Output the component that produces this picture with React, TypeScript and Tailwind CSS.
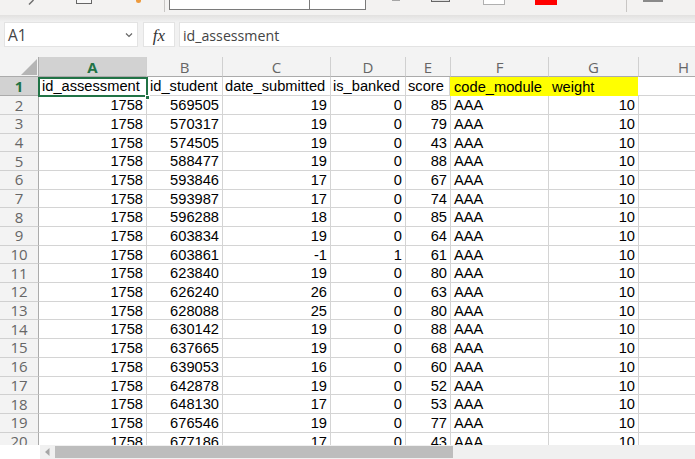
const columns = [
  { label: "A", w: "w-[108px]", active: true },
  { label: "B", w: "w-[76px]" },
  { label: "C", w: "w-[108px]" },
  { label: "D", w: "w-[75px]" },
  { label: "E", w: "w-[45px]" },
  { label: "F", w: "w-[98px]" },
  { label: "G", w: "w-[90px]" },
  { label: "H", w: "w-[90px]" },
];

const data: [string, string, string, string][] = [
  ["569505", "19", "0", "85"],
  ["570317", "19", "0", "79"],
  ["574505", "19", "0", "43"],
  ["588477", "19", "0", "88"],
  ["593846", "17", "0", "67"],
  ["593987", "17", "0", "74"],
  ["596288", "18", "0", "85"],
  ["603834", "19", "0", "64"],
  ["603861", "-1", "1", "61"],
  ["623840", "19", "0", "80"],
  ["626240", "26", "0", "63"],
  ["628088", "25", "0", "80"],
  ["630142", "19", "0", "88"],
  ["637665", "19", "0", "68"],
  ["639053", "16", "0", "60"],
  ["642878", "19", "0", "52"],
  ["648130", "17", "0", "53"],
  ["676546", "19", "0", "77"],
  ["677186", "17", "0", "43"],
];

const sans = "font-['Liberation_Sans',Arial,sans-serif]";
const ui = "font-['Open_Sans','Noto_Sans',sans-serif]";

function Cell({
  w,
  right,
  fill,
  pl = "pl-[3px]",
  children,
}: {
  w: string;
  right?: boolean;
  fill?: boolean;
  pl?: string;
  children?: React.ReactNode;
}) {
  return (
    <div
      className={`${w} ${pl} shrink-0 h-full flex items-center overflow-hidden whitespace-nowrap pr-[3px] pt-px text-[14.67px] leading-none text-black ${right ? "justify-end" : "justify-start"} ${fill ? "bg-[#ffff00]" : "border-r border-b border-[#d4d4d4]"}`}
    >
      {children}
    </div>
  );
}

function RowLabel({ n, active }: { n: number; active?: boolean }) {
  return (
    <div
      className={`w-[39px] shrink-0 h-full flex items-center justify-center ${ui} text-[15px] leading-none border-r border-b ${active ? "bg-[#d2d2d2] text-[#217346] font-bold border-[#ababab]" : "bg-[#f3f3f3] text-[#666666] border-[#d0d0d0] border-r-[#ababab]"}`}
    >
      {n}
    </div>
  );
}

export default function App() {
  return (
    <div className="w-[695px] h-[459px] overflow-hidden flex flex-col bg-[#f1f1f1]">
      {/* Ribbon remnants */}
      <div className="h-[15px] shrink-0 bg-[#f3f2f1] flex items-start overflow-hidden">
        <svg className="ml-[28px] shrink-0" width="8" height="5" viewBox="0 0 8 5">
          <path d="M1 4.5 L5.5 0" stroke="#6b6b6b" strokeWidth="1.4" fill="none" />
        </svg>
        <div className="ml-[40px] w-[16px] h-[4px] shrink-0 bg-[#f8f8f8] border-x border-b border-[#666666]" />
        <div className="ml-[44px] w-[5px] h-[3px] shrink-0 rounded-b-full bg-[#ed9a3d]" />
        <div className="ml-[23px] w-px h-[12px] shrink-0 bg-[#c8c6c4]" />
        <div className="ml-[4px] w-[197px] h-[10px] shrink-0 bg-white border-x border-b border-[#7a7a7a] flex">
          <div className="w-[140px] h-full border-r border-[#7a7a7a]" />
        </div>
        <div className="ml-[26px] w-[8px] h-px shrink-0 bg-[#a6a6a6]" />
        <div className="ml-[31px] w-[19px] h-[2px] shrink-0 border-b border-x border-[#666666] bg-[#dedede]" />
        <div className="ml-[33px] w-[22px] h-[5px] shrink-0 bg-white border-x border-b border-[#b0b0b0]" />
        <div className="ml-[30px] w-[22px] h-[5px] shrink-0 bg-[#ff0000]" />
        <div className="ml-[69px] w-px h-[12px] shrink-0 bg-[#c8c6c4]" />
        <div className="ml-[16px] w-[20px] h-[2px] shrink-0 bg-[#8a8a8a]" />
      </div>

      {/* Ribbon shadow */}
      <div className="h-[7px] shrink-0 bg-gradient-to-b from-[#e2e1e0] to-[#f1f1f1]" />

      {/* Formula bar */}
      <div className="h-[25px] shrink-0 flex">
        <div className={`ml-[4px] w-[134px] shrink-0 bg-white border border-[#e3e3e3] flex items-center justify-between pl-[3px] pr-[2px] pt-[3px] ${ui} text-[15.5px] leading-none text-[#444444]`}>
          <span>A1</span>
          <svg width="8" height="6" viewBox="0 0 8 6" className="mr-[2px] mb-[3px]">
            <path d="M1 1.5 L4 4.5 L7 1.5" stroke="#666666" strokeWidth="1.2" fill="none" />
          </svg>
        </div>
        <div className="ml-[5px] w-[32px] shrink-0 bg-white border border-[#e3e3e3] flex items-center justify-center pt-[2px] font-['Liberation_Serif',serif] italic text-[17px] leading-none text-[#333333]">
          fx
        </div>
        <div className={`ml-[4px] flex-1 bg-white border border-[#e3e3e3] border-r-0 flex items-center pl-[3px] pt-[4px] ${ui} text-[14.2px] leading-none text-[#444444]`}>
          id_assessment
        </div>
      </div>
      <div className="h-[10px] shrink-0 bg-[#f3f3f3]" />

      {/* Sheet */}
      <div className={`relative flex-1 min-h-0 overflow-hidden bg-white ${sans}`}>
        {/* Column headers */}
        <div className="flex h-[20px] bg-[#f3f3f3]">
          <div className="relative w-[39px] shrink-0 border-r border-b border-[#ababab]">
            <svg className="absolute right-[1px] bottom-[1px]" width="16" height="16" viewBox="0 0 16 16">
              <path d="M16 0 V16 H0 Z" fill="#b5b5b5" />
            </svg>
          </div>
          {columns.map((c) => (
            <div
              key={c.label}
              className={`${c.w} shrink-0 flex items-center justify-center pt-px ${ui} text-[15px] leading-none border-r border-b border-r-[#d0d0d0] border-b-[#ababab] ${c.active ? "bg-[#d2d2d2] text-[#217346] font-bold" : "text-[#666666]"}`}
            >
              {c.label}
            </div>
          ))}
        </div>

        {/* Row 1 */}
        <div className="flex h-[19.2px]">
          <RowLabel n={1} active />
          <Cell w="w-[108px]">id_assessment</Cell>
          <Cell w="w-[76px]">id_student</Cell>
          <Cell w="w-[108px]" pl="pl-[2px]">date_submitted</Cell>
          <Cell w="w-[75px]" pl="pl-[2px]">is_banked</Cell>
          <Cell w="w-[44px]" pl="pl-[2px]">score</Cell>
          <Cell w="w-[98px]" pl="pl-[4px]" fill>code_module</Cell>
          <Cell w="w-[90px]" pl="pl-[4px]" fill>weight</Cell>
          <Cell w="w-[91px]" />
        </div>

        {/* Data rows */}
        {data.map((r, i) => (
          <div key={i} className="flex h-[18.7px]">
            <RowLabel n={i + 2} />
            <Cell w="w-[108px]" right>1758</Cell>
            <Cell w="w-[76px]" right>{r[0]}</Cell>
            <Cell w="w-[108px]" right>{r[1]}</Cell>
            <Cell w="w-[75px]" right>{r[2]}</Cell>
            <Cell w="w-[45px]" right>{r[3]}</Cell>
            <Cell w="w-[98px]">AAA</Cell>
            <Cell w="w-[90px]" right>10</Cell>
            <Cell w="w-[90px]" />
          </div>
        ))}

        {/* Selection outline on A1 */}
        <div className="absolute left-[38px] top-[20px] w-[110px] h-[20px] border-2 border-[#217346]" />
        <div className="absolute left-[145px] top-[38px] w-[5px] h-[5px] bg-[#217346] border border-white" />
      </div>

      {/* Scrollbar */}
      <div className="h-[14px] shrink-0 flex bg-white">
        <div className="ml-[40px] flex-1 bg-[#f0f0f0] flex items-center">
          <svg className="ml-[5px] shrink-0" width="5" height="8" viewBox="0 0 5 8">
            <path d="M4.5 0 V8 L0 4 Z" fill="#a6a6a6" />
          </svg>
          <div className="ml-[5px] w-[398px] h-[12px] shrink-0 bg-[#bdbdbd]" />
        </div>
      </div>
    </div>
  );
}
